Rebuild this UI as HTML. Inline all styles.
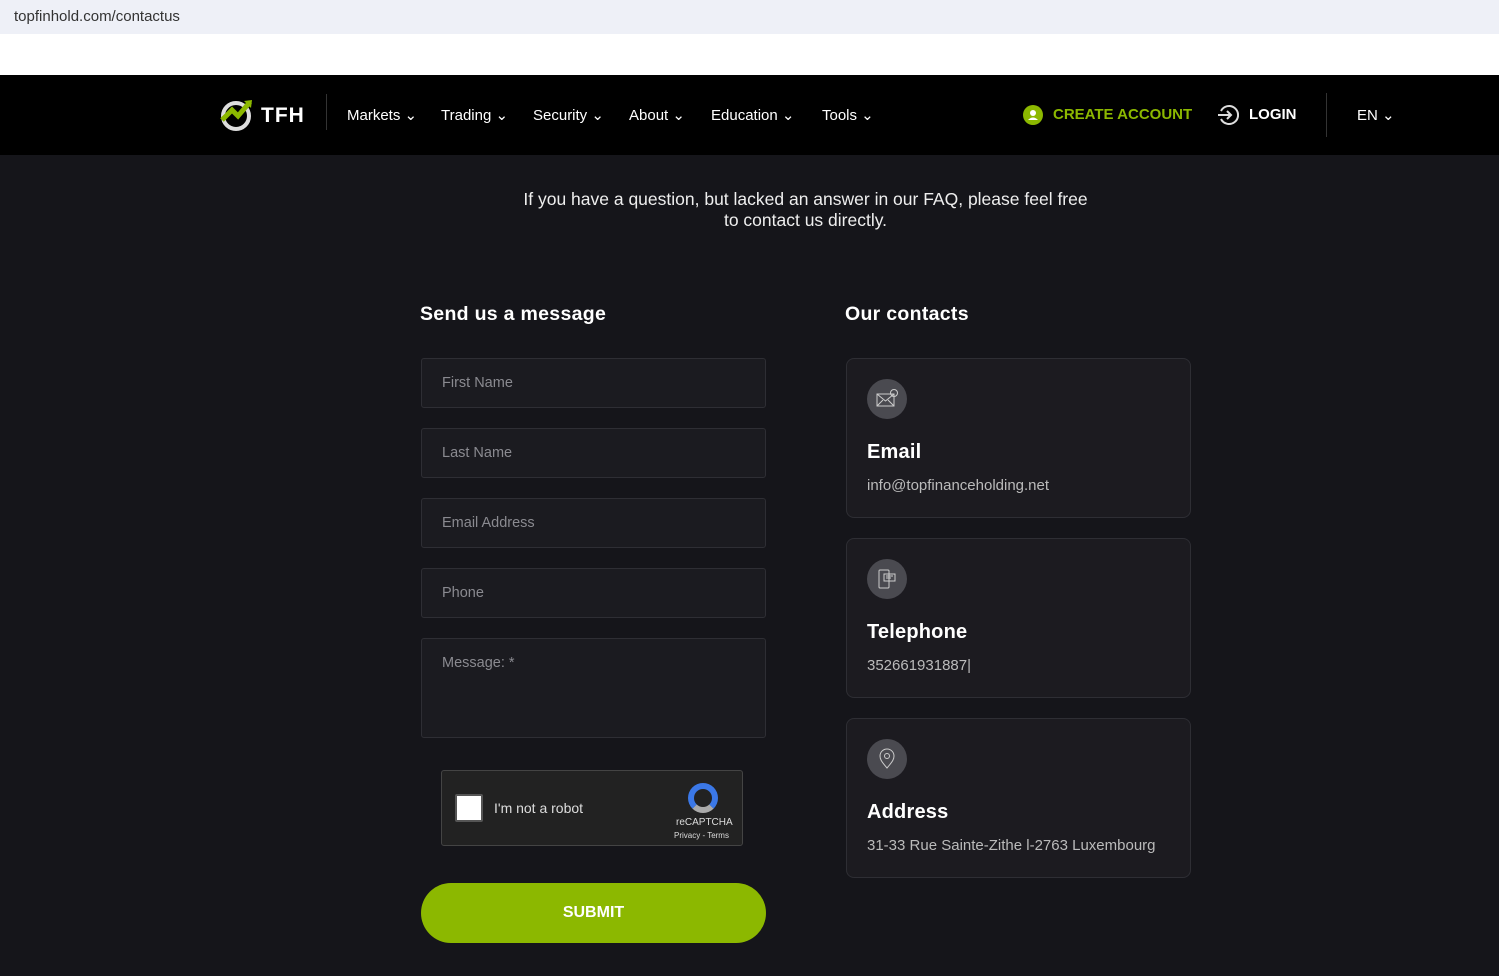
<!DOCTYPE html>
<html><head><style>
*{box-sizing:border-box;margin:0;padding:0}
body{width:1499px;height:976px;overflow:hidden;background:#15151a;font-family:"Liberation Sans",sans-serif;color:#fff;position:relative}
.url{position:absolute;top:0;left:0;width:1499px;height:34px;background:#eef0f7;color:#333;font-size:15px;padding:8px 14px}
.white{position:absolute;top:34px;left:0;width:1499px;height:41px;background:#fff}
.nav{position:absolute;top:75px;left:0;width:1499px;height:80px;background:#000}
.nav span{position:absolute;top:31px;font-size:15px;color:#fff}
.abs{position:absolute}
.inp{position:absolute;left:421px;width:345px;height:50px;background:#1b1b20;border:1px solid #2e2e34;border-radius:3px;color:#8a8a90;font-size:14.5px;padding:16px 20px}
.card{position:absolute;left:846px;width:345px;height:160px;background:#1c1b20;border:1px solid #2e2e34;border-radius:8px}
.card .ic{position:absolute;left:20px;top:20px;width:40px;height:40px;border-radius:50%;background:#4a4a50}
.card .ic svg{position:absolute;left:9px;top:9px}
.card h3{position:absolute;left:20px;top:82px;font-size:20px;font-weight:bold;letter-spacing:0.2px}
.card p{position:absolute;left:20px;top:118px;font-size:15px;color:#bbb}
h2{position:absolute;top:303px;font-size:19.5px;font-weight:bold;letter-spacing:0.3px}
</style></head><body>
<div class="url">topfinhold.com/contactus</div>
<div class="white"></div>
<div class="nav">
<svg class="abs" style="left:220px;top:23px" width="34" height="34" viewBox="0 0 34 34"><circle cx="16" cy="18" r="13" fill="none" stroke="#ddd" stroke-width="4"/><path d="M2 22 L12 12 L18 18 L30 4" stroke="#8cb800" stroke-width="5" fill="none"/><path d="M24 3 L32 2 L31 10Z" fill="#8cb800"/></svg>
<span style="left:261px;top:29px;font-size:21px;font-weight:bold;letter-spacing:1px">TFH</span>
<div class="abs" style="left:326px;top:19px;width:1px;height:36px;background:#333"></div>
<span style="left:347px">Markets ⌄</span>
<span style="left:441px">Trading ⌄</span>
<span style="left:533px">Security ⌄</span>
<span style="left:629px">About ⌄</span>
<span style="left:711px">Education ⌄</span>
<span style="left:822px">Tools ⌄</span>
<svg class="abs" style="left:1023px;top:30px" width="20" height="20" viewBox="0 0 20 20"><circle cx="10" cy="10" r="10" fill="#8cb800"/><circle cx="10" cy="8" r="3" fill="#fff"/><path d="M5 15 Q10 10 15 15Z" fill="#fff"/></svg>
<span style="left:1053px;color:#8cb800;font-weight:bold;top:31px">CREATE ACCOUNT</span>
<svg class="abs" style="left:1217px;top:29px" width="22" height="22" viewBox="0 0 22 22"><path d="M4 7 A9 9 0 1 1 4 15" fill="none" stroke="#ddd" stroke-width="2"/><path d="M1 11 H14 M10 7 L14 11 L10 15" fill="none" stroke="#ddd" stroke-width="2"/></svg>
<span style="left:1249px;font-weight:bold">LOGIN</span>
<div class="abs" style="left:1326px;top:18px;width:1px;height:44px;background:#333"></div>
<span style="left:1357px">EN ⌄</span>
</div>
<div class="abs" style="left:0;top:189px;width:1611px;text-align:center;font-size:17.5px;line-height:21px;color:#eee">If you have a question, but lacked an answer in our FAQ, please feel free<br>to contact us directly.</div>
<h2 style="left:420px">Send us a message</h2>
<h2 style="left:845px">Our contacts</h2>
<div class="inp" style="top:358px">First Name</div>
<div class="inp" style="top:428px">Last Name</div>
<div class="inp" style="top:498px">Email Address</div>
<div class="inp" style="top:568px">Phone</div>
<div class="inp" style="top:638px;height:100px">Message: *</div>
<div class="abs" style="left:441px;top:770px;width:302px;height:76px;background:#222;border:1px solid #444;border-radius:3px">
<div class="abs" style="left:13px;top:23px;width:28px;height:28px;background:#fff;border:2px solid #555;border-radius:2px"></div>
<div class="abs" style="left:52px;top:29px;font-size:14px;color:#ddd">I'm not a robot</div>
<div class="abs" style="left:246px;top:12px;width:30px;height:30px;border-radius:50%;border:6px solid #3b78e7;border-bottom-color:#aaa"></div>
<div class="abs" style="left:234px;top:46px;font-size:10px;color:#ddd">reCAPTCHA</div>
<div class="abs" style="left:232px;top:60px;font-size:8px;color:#ddd">Privacy - Terms</div>
</div>
<div class="abs" style="left:421px;top:883px;width:345px;height:60px;border-radius:30px;background:#8cb800;text-align:center;line-height:60px;font-weight:bold;font-size:16px">SUBMIT</div>
<div class="card" style="top:358px"><div class="ic"><svg width="22" height="22" viewBox="0 0 22 22" fill="none" stroke="#ccc" stroke-width="1"><rect x="1" y="6" width="17" height="12"/><path d="M1 6 L9.5 13 L18 6 M1 18 L7 12 M18 18 L12 12"/><circle cx="18" cy="5" r="3.5"/></svg></div><h3>Email</h3><p>info@topfinanceholding.net</p></div>
<div class="card" style="top:538px"><div class="ic"><svg width="22" height="22" viewBox="0 0 22 22" fill="none" stroke="#ccc" stroke-width="1"><rect x="3" y="2" width="10" height="18" rx="1"/><rect x="8" y="6" width="11" height="7"/><path d="M10 8 H17 M10 10 H15"/></svg></div><h3>Telephone</h3><p>352661931887|</p></div>
<div class="card" style="top:718px"><div class="ic"><svg width="22" height="22" viewBox="0 0 22 22" fill="none" stroke="#ccc" stroke-width="1"><path d="M11 20 C5 13 4 11 4 8 A7 7 0 0 1 18 8 C18 11 17 13 11 20Z"/><circle cx="11" cy="8" r="2.5"/></svg></div><h3>Address</h3><p>31-33 Rue Sainte-Zithe l-2763 Luxembourg</p></div>
</body></html>
